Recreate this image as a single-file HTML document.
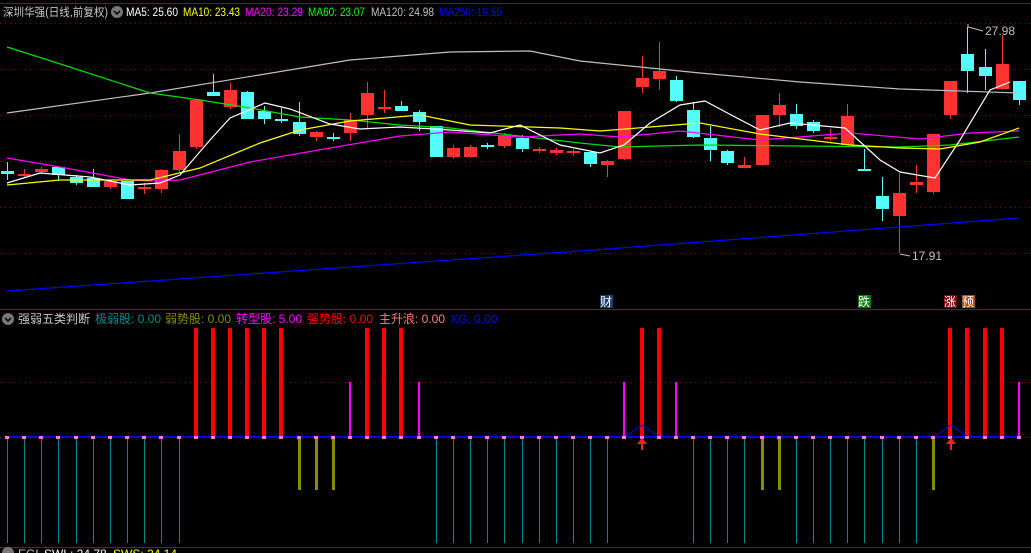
<!DOCTYPE html>
<html><head><meta charset="utf-8"><style>
html,body{margin:0;padding:0;background:#000;width:1031px;height:553px;overflow:hidden}
svg{display:block}
text{font-family:"Liberation Sans","Noto Sans CJK SC",sans-serif;font-size:12px}
.h{font-size:11.5px}
</style></head><body>
<svg id="s" width="1031" height="553" xmlns="http://www.w3.org/2000/svg">
<line x1="0" y1="3.5" x2="1031" y2="3.5" stroke="#a00" />
<line x1="0" y1="309.5" x2="1031" y2="309.5" stroke="#a00"/>
<line x1="0" y1="547.5" x2="1031" y2="547.5" stroke="#a00"/>
<g stroke="#800" stroke-dasharray="1,4">
<line x1="0" y1="23.5" x2="1031" y2="23.5"/><line x1="0" y1="69.5" x2="1031" y2="69.5"/><line x1="0" y1="115.5" x2="1031" y2="115.5"/><line x1="0" y1="161.5" x2="1031" y2="161.5"/><line x1="0" y1="207.5" x2="1031" y2="207.5"/><line x1="0" y1="253.5" x2="1031" y2="253.5"/><line x1="0" y1="382.5" x2="1031" y2="382.5"/><line x1="0" y1="437.5" x2="1031" y2="437.5"/>
</g>
<g id="c"></g>
<g fill="none" stroke-width="1.2">
<polyline stroke="#c0c0c0" points="7,113 150,93 350,60 450,52 530,51 580,61 700,73 800,82 900,89 1019,93"/>
<polyline stroke="#00e000" points="7,47 48,60 150,93 200,100 250,108 300,117 350,120 400,125 450,128 580,143 620,147 700,145 800,146 900,147 950,145 1019,137"/>
<polyline stroke="#ff00ff" points="7,158 60,167 130,180 150,181 180,180 250,162 330,148 400,136 450,132 520,137 580,134 620,137 680,131 760,140 850,133 920,139 970,133 1019,131"/>
<polyline stroke="#ffff00" points="7,185 60,180 150,180 200,168 260,143 300,130 350,121 420,115 470,125 560,128 600,131 650,127 700,123 760,134 850,145 900,148 940,149 980,142 1019,128"/>
<polyline stroke="#fff" points="7,183 40,173 90,177 130,185 160,183 180,175 210,140 230,118 265,103 290,109 330,124 360,129 400,127 450,130 490,133 520,125 560,145 600,153 624,145 650,123 680,105 705,101 735,117 760,130 790,123 845,128 880,160 900,172 935,178 960,140 990,90 1010,82"/>
<polyline stroke="#0000ff" points="7,291 580,251 1019,218"/>
</g>
<g fill="#c0c0c0"><text x="985" y="35">27.98</text><text x="912" y="260">17.91</text></g>
<polyline points="968,24 968,27 983,31" stroke="#c0c0c0" fill="none"/>
<polyline points="900,254 910,256" stroke="#c0c0c0" fill="none"/>
<!-- header -->
<text class="h" x="3" y="16" fill="#c8c8c8" textLength="105" lengthAdjust="spacingAndGlyphs">深圳华强(日线,前复权)</text>
<circle cx="117" cy="12" r="6" fill="#777"/><polyline points="114,11 117,14 120,11" stroke="#000" stroke-width="1.5" fill="none"/>
<text class="h" x="126" y="16" fill="#fff" textLength="52" lengthAdjust="spacingAndGlyphs">MA5: 25.60</text>
<text class="h" x="183" y="16" fill="#ffff00" textLength="57" lengthAdjust="spacingAndGlyphs">MA10: 23.43</text>
<text class="h" x="245" y="16" fill="#ff00ff" textLength="58" lengthAdjust="spacingAndGlyphs">MA20: 23.29</text>
<text class="h" x="308" y="16" fill="#00ff00" textLength="57" lengthAdjust="spacingAndGlyphs">MA60: 23.07</text>
<text class="h" x="371" y="16" fill="#c0c0c0" textLength="63" lengthAdjust="spacingAndGlyphs">MA120: 24.98</text>
<text class="h" x="439" y="16" fill="#0000ff" textLength="63" lengthAdjust="spacingAndGlyphs">MA250: 19.55</text>
<!-- event icons -->
<rect x="600" y="295" width="13" height="13" fill="#1c3c6c"/><text x="600" y="306" fill="#fff">财</text>
<rect x="858" y="295" width="13" height="13" fill="#0a7a0a"/><text x="858" y="306" fill="#fff">跌</text>
<rect x="944" y="295" width="13" height="13" fill="#7a0a0a"/><text x="944" y="306" fill="#fff">涨</text>
<rect x="962" y="295" width="13" height="13" fill="#b04a10"/><text x="962" y="306" fill="#fff">预</text>
<!-- lower header -->
<circle cx="8" cy="319" r="6" fill="#777"/><polyline points="5,318 8,321 11,318" stroke="#000" stroke-width="1.5" fill="none"/>
<text x="18" y="323" fill="#c8c8c8">强弱五类判断</text>
<text x="95" y="323" fill="#008b8b">极弱股: 0.00</text>
<text x="165" y="323" fill="#8b8b00">弱势股: 0.00</text>
<text x="236" y="323" fill="#ff00ff">转型股: 5.00</text>
<text x="307" y="323" fill="#ff0000">强势股: 0.00</text>
<text x="379" y="323" fill="#ff8080">主升浪: 0.00</text>
<text x="450" y="323" fill="#0000ff">XG: 0.00</text>
<g id="l"></g>
<line x1="7" y1="437" x2="1019" y2="437" stroke="#0000ff" stroke-width="2"/>
<polyline points="625,437 642,425 659,437" stroke="#0000ff" fill="none"/>
<polyline points="934,437 951,425 968,437" stroke="#0000ff" fill="none"/>
<g id="d"></g>
<g fill="#ff2020"><polygon points="642,438 637,444 647,444"/><rect x="641" y="443" width="2" height="7"/><polygon points="951,438 946,444 956,444"/><rect x="950" y="443" width="2" height="7"/></g>
<circle cx="8" cy="553" r="6" fill="#777"/>
<text x="18" y="558" fill="#c8c8c8">EGL</text><text x="44" y="558" fill="#fff">SWL: 24.78</text><text x="113" y="558" fill="#ffff00">SWS: 24.14</text>
</svg>
<script>
var C=[[0,171,174,162,180],[1,174,176,169,178],[1,169,172,167,174],[0,167,175,166,180],[0,177,183,175,185],[0,178,187,169,187],[1,181,187,180,189],[0,181,199,181,199],[1,187,189,183,194],[1,170,189,169,193],[1,151,170,134,172],[1,100,147,100,149],[0,92,96,74,96],[1,90,107,83,109],[0,92,119,91,118],[0,111,119,106,124],[0,119,120,108,123],[0,122,134,102,136],[1,132,137,131,141],[0,137,137,133,141],[1,120,133,113,141],[1,93,115,82,128],[1,107,109,90,113],[0,106,111,101,111],[0,112,122,110,131],[0,126,157,126,157],[1,148,157,145,159],[1,147,157,145,158],[0,145,147,143,149],[1,135,146,133,148],[0,138,149,135,152],[1,149,151,147,153],[1,150,153,148,155],[1,151,153,149,156],[0,152,164,152,167],[1,161,165,160,177],[1,111,159,111,160],[1,78,87,56,93],[1,71,79,42,90],[0,80,101,76,102],[0,110,137,102,138],[0,138,150,126,161],[0,151,163,150,165],[1,165,168,157,168],[1,115,165,115,166],[1,105,115,93,127],[0,114,126,104,129],[0,122,131,120,133],[1,137,137,129,141],[1,116,145,104,145],[0,169,170,149,170],[0,196,209,177,221],[1,193,216,173,253],[1,182,185,165,193],[1,134,192,134,194],[1,81,115,81,119],[0,54,71,27,93],[0,67,76,49,90],[1,64,89,35,90],[0,81,100,81,105]];
var L="TTTTTTTTTTTRRRRRROOOMRRRMTTTTTTTTTTTMRRMTTTTOOTTTTTTTTORRRRM";
var ns="http://www.w3.org/2000/svg",g=document.getElementById('c'),l=document.getElementById('l'),d=document.getElementById('d');
function R(p,x,y,w,h,f){var r=document.createElementNS(ns,'rect');r.setAttribute('x',x);r.setAttribute('y',y);r.setAttribute('width',w);r.setAttribute('height',Math.max(h,1));r.setAttribute('fill',f);p.appendChild(r);}
for(var i=0;i<60;i++){var x=Math.round(7+17.15*i),c=C[i],col=c[0]?'#ff3232':'#54fcfc';
R(g,x,c[3],1,c[4]-c[3],col);R(g,x-6,c[1],13,Math.max(c[2]-c[1],2),col);
var t=L[i];
if(t=='T')R(l,x,437,1,106,'#008b8b');
if(t=='O')R(l,x-1,437,3,53,'#8b8b00');
if(t=='R')R(l,x-2,328,4,109,'#ff0000');
if(t=='M')R(l,x-1,382,2,55,'#ff00ff');
R(d,x-2,436,4,3,'#ff80c0');}
</script>
</body></html>
